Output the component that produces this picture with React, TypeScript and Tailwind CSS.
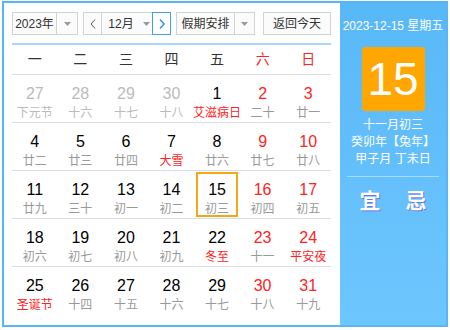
const font = { fontFamily: '"Liberation Sans", "Noto Sans CJK SC", sans-serif' };

type Day = { d: number; l: string; kind?: "prev" | "red"; lred?: boolean; today?: boolean };

const weeks: Day[][] = [
  [
    { d: 27, l: "下元节", kind: "prev" },
    { d: 28, l: "十六", kind: "prev" },
    { d: 29, l: "十七", kind: "prev" },
    { d: 30, l: "十八", kind: "prev" },
    { d: 1, l: "艾滋病日", lred: true },
    { d: 2, l: "二十", kind: "red" },
    { d: 3, l: "廿一", kind: "red" },
  ],
  [
    { d: 4, l: "廿二" },
    { d: 5, l: "廿三" },
    { d: 6, l: "廿四" },
    { d: 7, l: "大雪", lred: true },
    { d: 8, l: "廿六" },
    { d: 9, l: "廿七", kind: "red" },
    { d: 10, l: "廿八", kind: "red" },
  ],
  [
    { d: 11, l: "廿九" },
    { d: 12, l: "三十" },
    { d: 13, l: "初一" },
    { d: 14, l: "初二" },
    { d: 15, l: "初三", today: true },
    { d: 16, l: "初四", kind: "red" },
    { d: 17, l: "初五", kind: "red" },
  ],
  [
    { d: 18, l: "初六" },
    { d: 19, l: "初七" },
    { d: 20, l: "初八" },
    { d: 21, l: "初九" },
    { d: 22, l: "冬至", lred: true },
    { d: 23, l: "十一", kind: "red" },
    { d: 24, l: "平安夜", kind: "red", lred: true },
  ],
  [
    { d: 25, l: "圣诞节", lred: true },
    { d: 26, l: "十四" },
    { d: 27, l: "十五" },
    { d: 28, l: "十六" },
    { d: 29, l: "十七" },
    { d: 30, l: "十八", kind: "red" },
    { d: 31, l: "十九", kind: "red" },
  ],
];

const Caret = () => (
  <svg width="7" height="4" viewBox="0 0 7 4">
    <path d="M0 0h7L3.5 4z" fill="#9a9a9a" />
  </svg>
);

const Toolbar = () => (
  <div className="flex items-center h-[23px] text-[12px] text-[#333]">
    <div className="flex h-full w-[66px] border border-[#d3d3d3] bg-[#fbfbfb]">
      <div className="w-[44px] flex items-center justify-center border-r border-[#d3d3d3]">2023年</div>
      <div className="flex-1 flex items-center justify-center"><Caret /></div>
    </div>
    <div className="flex h-full w-[88px] ml-[5px] border border-[#d3d3d3] bg-[#fbfbfb]">
      <div className="w-[18px] flex items-center justify-center border-r border-[#d3d3d3]">
        <svg width="6" height="10" viewBox="0 0 6 10">
          <path d="M5 0.5L1 5l4 4.5" fill="none" stroke="#555" strokeWidth="1" />
        </svg>
      </div>
      <div className="w-[50px] flex items-center justify-center gap-[9px] pl-[4px]">
        <span>12月</span>
        <Caret />
      </div>
      <div className="flex-1 -my-px -mr-px flex items-center justify-center border border-[#3aa3ef] bg-white">
        <svg width="6" height="10" viewBox="0 0 6 10">
          <path d="M1 0.5L5 5l-4 4.5" fill="none" stroke="#2b8fe0" strokeWidth="1.4" />
        </svg>
      </div>
    </div>
    <div className="flex h-full w-[79px] ml-[5px] border border-[#d3d3d3] bg-[#fbfbfb]">
      <div className="w-[58px] flex items-center justify-center border-r border-[#d3d3d3]">假期安排</div>
      <div className="flex-1 flex items-center justify-center"><Caret /></div>
    </div>
    <div className="flex h-full w-[68px] ml-[8px] items-center justify-center border border-[#d3d3d3] bg-[#fbfbfb]">
      返回今天
    </div>
  </div>
);

const Cell = ({ day }: { day: Day }) => {
  const numColor = day.kind === "prev" ? "text-[#bbbbbb]" : day.kind === "red" ? "text-[#ff2222]" : "text-black";
  const lunarColor = day.lred ? "text-[#ff2222]" : day.kind === "prev" ? "text-[#bbbbbb]" : "text-[#999999]";
  return (
    <div className="flex items-center justify-center h-full">
      <div
        className={`w-[42px] h-[45px] flex flex-col items-center ${
          day.today ? "border-2 border-[#f6a619] pt-[6px]" : "pt-[8px]"
        }`}
      >
        <div className={`text-[16px] leading-[19px] ${numColor}`}>{day.d}</div>
        <div className={`text-[12px] leading-[14px] mt-[3px] whitespace-nowrap ${lunarColor}`}>{day.l}</div>
      </div>
    </div>
  );
};

export default function App() {
  return (
    <div className="w-[450px] h-[330px] bg-white pt-[1px] pl-[2px]" style={font}>
      <div className="w-[446px] h-[326px] border-2 border-[#56b6f6] flex">
        <div className="w-[336px] pl-[8px] pt-[9px]">
          <Toolbar />
          <div className="w-[319px] mt-[8px] border-t-2 border-[#a8d8f7]">
            <div className="grid grid-cols-7 h-[29px] items-center text-[14px] text-[#333]">
              {["一", "二", "三", "四", "五", "六", "日"].map((w, i) => (
                <div key={w} className={`text-center ${i > 4 ? "text-[#ff2222]" : ""}`}>{w}</div>
              ))}
            </div>
            {weeks.map((wk, i) => (
              <div key={i} className="grid grid-cols-7 h-[48px] border-t border-[#dddddd]">
                {wk.map((d, j) => (
                  <Cell key={j} day={d} />
                ))}
              </div>
            ))}
          </div>
        </div>
        <div className="flex-1 bg-gradient-to-b from-[#58b8f7] to-[#6ec6fe] text-white flex flex-col items-center">
          <div className="mt-[15px] text-[12px] leading-[16px] whitespace-nowrap">2023-12-15 星期五</div>
          <div className="mt-[13px] w-[63px] h-[64px] bg-[#ffa600] rounded-[3px] flex items-center justify-center text-[46px] leading-none font-light">
            15
          </div>
          <div className="mt-[6px] text-[12px] leading-[17px] text-center">
            <div>十一月初三</div>
            <div>癸卯年【兔年】</div>
            <div>甲子月 丁未日</div>
          </div>
          <div className="mt-[8px] w-[92px] border-t border-[#a3dcff]" />
          <div className="mt-[12px] flex gap-[25px] text-[21px] leading-[24px] font-bold [text-shadow:1px_1px_0_#6f72e8]">
            <span>宜</span>
            <span>忌</span>
          </div>
        </div>
      </div>
    </div>
  );
}
